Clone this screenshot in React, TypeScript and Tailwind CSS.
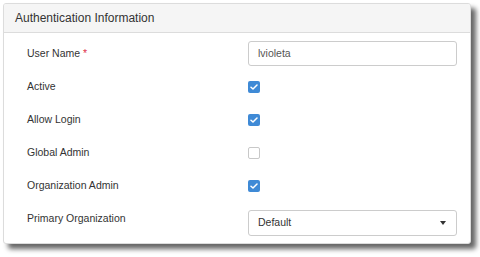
import React from "react"

const font = { fontFamily: '"Liberation Sans", Arial, sans-serif' }

function Check({ on }: { on: boolean }) {
  if (!on) {
    return <div className="w-[12px] h-[12px] rounded-[2px] border border-[#c8c8c8] bg-white" />
  }
  return (
    <div className="w-[12px] h-[12px] rounded-[2px] bg-[#3f8ad6] flex items-center justify-center">
      <svg width="8" height="6" viewBox="0 0 8 6" fill="none">
        <path d="M1 3.2 L3 5 L7 1" stroke="white" strokeWidth="1.5" strokeLinecap="round" strokeLinejoin="round" />
      </svg>
    </div>
  )
}

function Row({ label, required, children, className = "" }: { label: string; required?: boolean; children: React.ReactNode; className?: string }) {
  return (
    <div className={`flex h-[25px] ${className}`}>
      <div className="w-[221px] text-[10.5px] text-[#333] self-center">
        {label}
        {required && <span className="text-[#e0304a] ml-[3px]">*</span>}
      </div>
      <div className="w-[209px] flex items-center">{children}</div>
    </div>
  )
}

export default function App() {
  return (
    <div className="w-[480px] h-[257px] bg-white pt-[3px] pl-[3px]" style={font}>
      <div className="w-[468px] h-[241px] border border-[#dcdcdc] rounded-[3px] bg-white shadow-[5px_5px_5px_rgba(0,0,0,0.6)] overflow-hidden">
        {/* Header */}
        <div className="h-[29px] bg-[#f5f5f5] border-b border-[#dcdcdc] pl-[11px] flex items-center text-[12px] text-[#333]">
          Authentication Information
        </div>

        {/* Body */}
        <div className="pl-[23px] pt-[8px] flex flex-col gap-[8px]">
          <Row label="User Name" required>
            <div className="w-full h-[25px] border border-[#ccc] rounded-[3px] px-[9px] flex items-center text-[10.5px] text-[#555]">
              lvioleta
            </div>
          </Row>
          <Row label="Active">
            <Check on />
          </Row>
          <Row label="Allow Login">
            <Check on />
          </Row>
          <Row label="Global Admin">
            <Check on={false} />
          </Row>
          <Row label="Organization Admin">
            <Check on />
          </Row>
          {/* label sits near the top of the select here, not centred */}
          <div className="flex mt-[4px]">
            <div className="w-[221px] text-[10.5px] text-[#333] pt-[1px]">Primary Organization</div>
            <div className="w-[209px] h-[26px] border border-[#ccc] rounded-[3px] pl-[9px] pr-[10px] flex items-center justify-between text-[10.5px] text-[#333]">
              <span>Default</span>
              <svg width="6" height="4" viewBox="0 0 6 4">
                <path d="M0 0 H6 L3 4 Z" fill="#333" />
              </svg>
            </div>
          </div>
        </div>
      </div>
    </div>
  )
}
